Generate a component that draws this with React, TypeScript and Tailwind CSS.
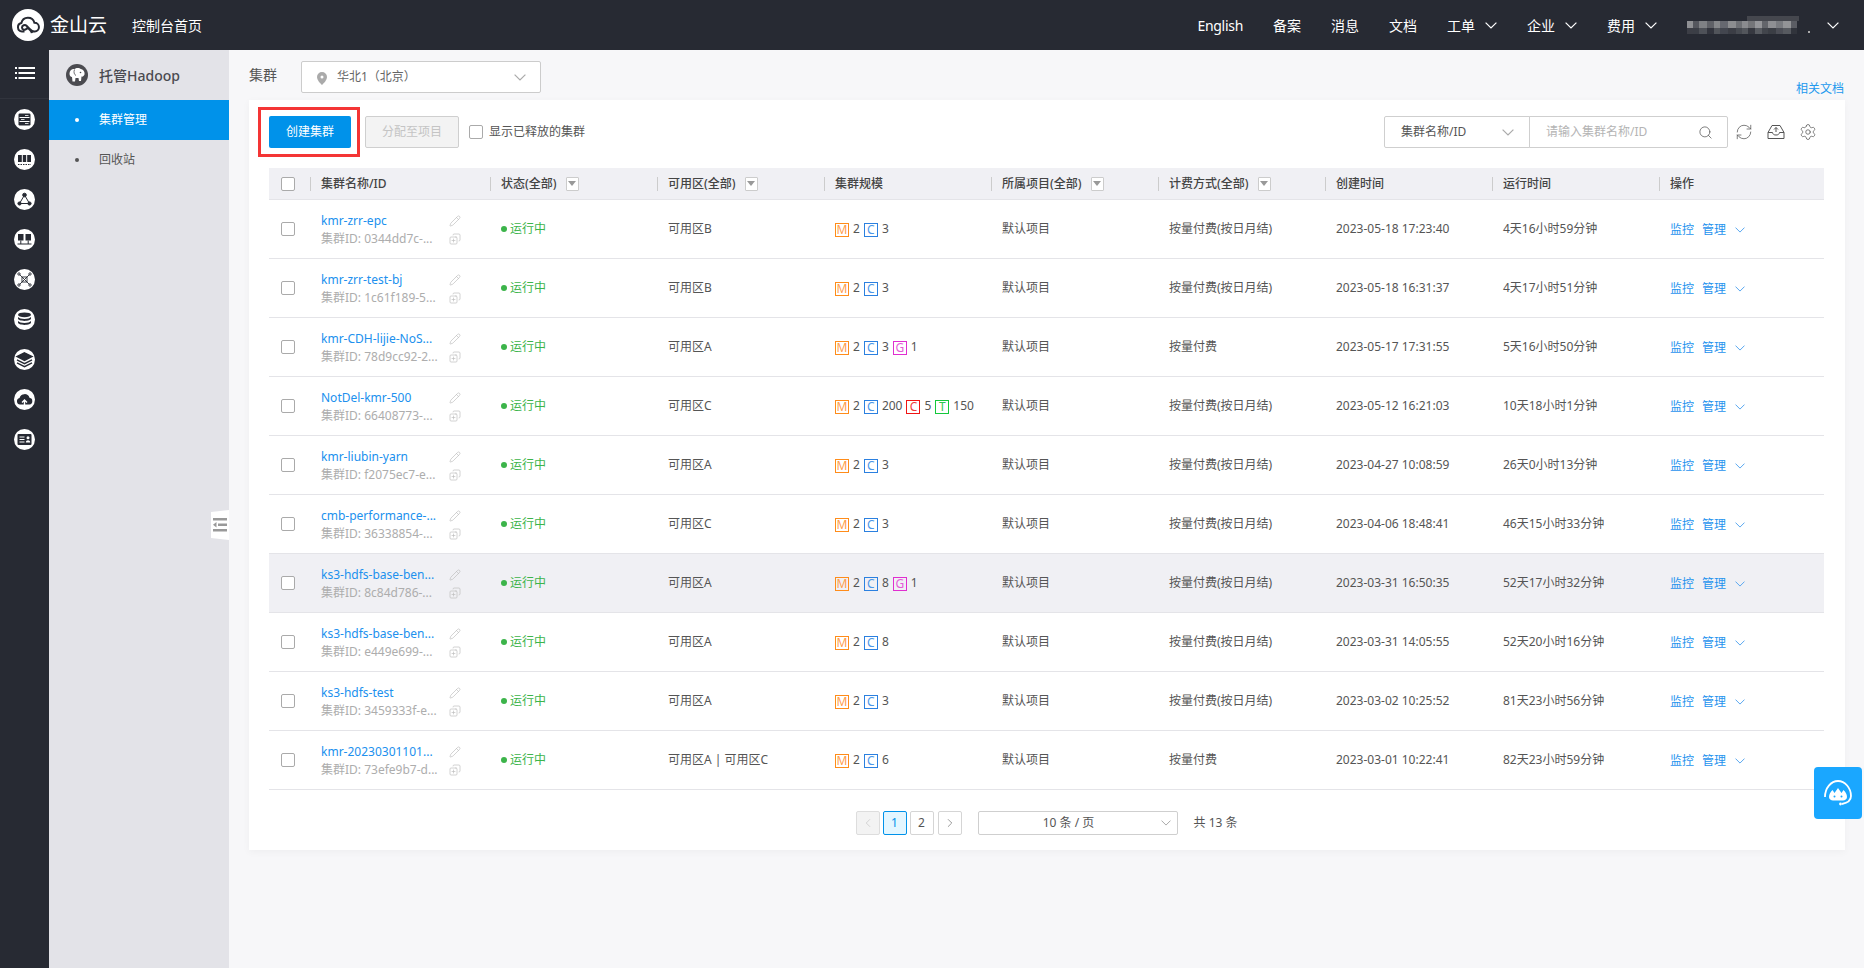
import { ChevronLeft, ChevronRight, CopyPlus, Pencil, RefreshCw, Search, Settings } from 'lucide-react';

type Part = { l: string; c: string; n: number };

const M: Part = { l: 'M', c: 'orange', n: 2 };
const C = (n: number): Part => ({ l: 'C', c: 'blue', n });
const G: Part = { l: 'G', c: 'pink', n: 1 };

const FULL = '按量付费(按日月结)';

const rows = [
  { name: 'kmr-zrr-epc', id: '0344dd7c-...', zone: '可用区B', parts: [M, C(3)], bill: FULL, created: '2023-05-18 17:23:40', run: '4天16小时59分钟' },
  { name: 'kmr-zrr-test-bj', id: '1c61f189-5...', zone: '可用区B', parts: [M, C(3)], bill: FULL, created: '2023-05-18 16:31:37', run: '4天17小时51分钟' },
  { name: 'kmr-CDH-lijie-NoS...', id: '78d9cc92-2...', zone: '可用区A', parts: [M, C(3), G], bill: '按量付费', created: '2023-05-17 17:31:55', run: '5天16小时50分钟' },
  { name: 'NotDel-kmr-500', id: '66408773-...', zone: '可用区C', parts: [M, C(200), { l: 'C', c: 'red', n: 5 }, { l: 'T', c: 'green', n: 150 }], bill: FULL, created: '2023-05-12 16:21:03', run: '10天18小时1分钟' },
  { name: 'kmr-liubin-yarn', id: 'f2075ec7-e...', zone: '可用区A', parts: [M, C(3)], bill: FULL, created: '2023-04-27 10:08:59', run: '26天0小时13分钟' },
  { name: 'cmb-performance-...', id: '36338854-...', zone: '可用区C', parts: [M, C(3)], bill: FULL, created: '2023-04-06 18:48:41', run: '46天15小时33分钟' },
  { name: 'ks3-hdfs-base-ben...', id: '8c84d786-...', zone: '可用区A', parts: [M, C(8), G], bill: FULL, created: '2023-03-31 16:50:35', run: '52天17小时32分钟', hover: true },
  { name: 'ks3-hdfs-base-ben...', id: 'e449e699-...', zone: '可用区A', parts: [M, C(8)], bill: FULL, created: '2023-03-31 14:05:55', run: '52天20小时16分钟' },
  { name: 'ks3-hdfs-test', id: '3459333f-e...', zone: '可用区A', parts: [M, C(3)], bill: FULL, created: '2023-03-02 10:25:52', run: '81天23小时56分钟' },
  { name: 'kmr-20230301101...', id: '73efe9b7-d...', zone: '可用区A | 可用区C', parts: [M, C(6)], bill: '按量付费', created: '2023-03-01 10:22:41', run: '82天23小时59分钟' },
];

const badgeColor: Record<string, string> = {
  orange: 'border-[#ff8c1a] text-[#ff9d4d]',
  blue: 'border-[#2b80e0] text-[#4b96e8]',
  pink: 'border-[#e02ed0] text-[#e55ad8]',
  red: 'border-[#f01414] text-[#f03c3c]',
  green: 'border-[#14c83c] text-[#30c850]',
};

const columns = [
  { t: '状态(全部)', f: true },
  { t: '可用区(全部)', f: true },
  { t: '集群规模' },
  { t: '所属项目(全部)', f: true },
  { t: '计费方式(全部)', f: true },
  { t: '创建时间' },
  { t: '运行时间' },
  { t: '操作' },
];

const gridCols = 'grid grid-cols-[41px_180px_repeat(7,167px)_1fr]';

function Chevron({ className }: { className?: string }) {
  return (
    <svg width="12" height="7" viewBox="0 0 12 7" fill="none" stroke="currentColor" strokeWidth="1.2" className={className}>
      <path d="M.6.6 6 6 11.4.6" />
    </svg>
  );
}

function Check() {
  return <span className="block w-[14px] h-[14px] bg-white border border-[#aaaaaa] rounded-[2px]" />;
}

const D = '#272a33';

// glyphs of the dark rail, all on a 21 wide white disc
const railGlyphs = [
  <g key="1">
    <rect x="4.500" y="4.500" width="12" height="12" rx="1.200" fill={D} />
    <path d="M5.500 8.500h10M5.500 12.500h10" stroke="#fff" strokeWidth="1" />
    <path d="M11 6.500h3.500M7 10.500h3.500M11 14.500h3.500" stroke="#fff" strokeWidth=".8" />
  </g>,
  <g key="2">
    <rect x="4" y="6" width="13" height="7" fill={D} />
    <path d="M8.300 6v7M12.700 6v7" stroke="#fff" strokeWidth="1" />
    <path d="M4 15.500h13" stroke={D} strokeWidth="1.200" strokeDasharray="1.500 1" />
  </g>,
  <g key="3" fill={D} stroke={D} strokeWidth="1">
    <path d="M10.500 6 5.500 14.500h10Z" fill="none" />
    <circle cx="10.500" cy="6" r="1.800" />
    <circle cx="5.500" cy="14.500" r="1.600" />
    <circle cx="15.500" cy="14.500" r="1.600" />
  </g>,
  <g key="4" fill={D}>
    <rect x="4" y="5" width="5.500" height="6.500" />
    <rect x="11.500" y="5" width="5.500" height="6.500" />
    <path d="M6.800 11.500v3.500M14.200 11.500v3.500M3.500 15h14" stroke={D} strokeWidth="1" fill="none" />
  </g>,
  <g key="5" stroke={D} strokeWidth=".9" fill="none">
    <rect x="8" y="8" width="5" height="5" />
    <path d="M8 8 5.500 5.500M13 8l2.500-2.500M8 13l-2.500 2.500M13 13l2.500 2.500M8 8l5 5M13 8l-5 5" />
    <circle cx="5" cy="5" r="1.200" />
    <circle cx="16" cy="5" r="1.200" />
    <circle cx="5" cy="16" r="1.200" />
    <circle cx="16" cy="16" r="1.200" />
  </g>,
  <g key="6" fill={D}>
    <ellipse cx="10.500" cy="5.800" rx="6.500" ry="2.400" />
    <path d="M4 8v1.500c0 1.300 2.900 2.400 6.500 2.400S17 10.800 17 9.500V8c-1 1.300-3.500 2-6.500 2S5 9.300 4 8Z" />
    <path d="M4 12v1.500c0 1.300 2.900 2.400 6.500 2.400S17 14.800 17 13.500V12c-1 1.300-3.500 2-6.500 2S5 13.300 4 12Z" />
  </g>,
  <g key="7" stroke={D} fill="none" strokeWidth="1.400">
    <path d="M10.500 3.800 18 7.600l-7.500 3.800L3 7.600Z" fill={D} />
    <path d="m3 10.800 7.500 3.800 7.500-3.800M3 13.800l7.500 3.800 7.500-3.800" />
  </g>,
  <g key="8">
    <path d="M6 15.500a3.300 3.300 0 0 1-.5-6.500 5.200 5.200 0 0 1 10-.2 3.400 3.400 0 0 1 0 6.700Z" fill={D} />
    <path d="M10.500 17.500v-6M8 13.500l2.500-2.500 2.500 2.500" stroke="#fff" strokeWidth="1.400" fill="none" />
  </g>,
  <g key="9">
    <rect x="3.500" y="5" width="14" height="11" rx="1" fill={D} />
    <path d="M5.500 8h5M5.500 10.500h5M5.500 13h5" stroke="#fff" strokeWidth="1" />
    <circle cx="14" cy="8.800" r="1.500" fill="#fff" />
    <path d="M11.800 13.500c0-3 4.400-3 4.400 0Z" fill="#fff" />
  </g>,
];

function Sidebar() {
  return (
    <aside className="w-[49px] shrink-0 bg-[#272a33] flex flex-col items-center">
      <div className="w-full h-[49px] flex items-center justify-center border-b border-[#31343d]">
        <svg width="20" height="14" viewBox="0 0 20 14" fill="#fff">
          <rect x="0" y="0" width="2" height="2" />
          <rect x="3.500" y="0" width="16.500" height="2" />
          <rect x="0" y="5" width="2" height="2" />
          <rect x="3.500" y="5" width="16.500" height="2" />
          <rect x="0" y="10" width="2" height="2" />
          <rect x="3.500" y="10" width="16.500" height="2" />
        </svg>
      </div>
      <div className="flex flex-col">
        {railGlyphs.map((g, i) => (
          <div key={i} className="w-[49px] h-[40px] flex items-center justify-center">
            <svg width="21" height="21" viewBox="0 0 21 21">
              <circle cx="10.500" cy="10.500" r="10.500" fill="#fff" />
              {g}
            </svg>
          </div>
        ))}
      </div>
    </aside>
  );
}

function Panel() {
  return (
    <nav className="relative w-[180px] shrink-0 bg-[#e3e3e8]">
      <div className="h-[50px] flex items-center pl-[17px] text-[14px] font-medium text-[#4a4a50]">
        <svg width="22" height="22" viewBox="0 0 22 22" className="mr-[11px]">
          <circle cx="11" cy="11" r="11" fill="#4b4b50" />
          <path d="M3.500 9.500C3.500 6.500 6 4.500 8.500 5c1.500-1.500 5-1.500 6.500 0 2.500.5 4 3 3.500 5.500-.5 1.500-2 2.500-3 2l-.5 4.500h-2l-.5-3h-3l-.5 3.500H6.500L6 13c-1.500 0-2.500-1.500-2.500-3.500Z" fill="#fff" />
          <path d="M8.500 5.500C7.500 8 8 10.500 10 11.500" stroke="#4b4b50" strokeWidth=".8" fill="none" />
          <circle cx="14.500" cy="8.500" r=".8" fill="#4b4b50" />
        </svg>
        托管Hadoop
      </div>
      <div className="h-[40px] flex items-center bg-[#0092ea] text-white text-[12px] pl-[26px]">
        <span className="w-[4px] h-[4px] rounded-full bg-white mr-[20px]" />
        集群管理
      </div>
      <div className="h-[40px] flex items-center text-[#555555] text-[12px] pl-[26px]">
        <span className="w-[4px] h-[4px] rounded-full bg-[#555555] mr-[20px]" />
        回收站
      </div>
      <button className="absolute top-[460px] right-0 w-[18px] h-[30px] bg-white flex items-center justify-center [clip-path:polygon(0_2px,100%_0,100%_100%,0_28px)]">
        <svg width="14" height="14" viewBox="0 0 14 14" fill="#999999">
          <rect x="0" y="0" width="14" height="2.500" />
          <rect x="5" y="5.500" width="9" height="2.500" />
          <rect x="0" y="11" width="14" height="2.500" />
          <path d="M3.500 4v5.500L0 6.700Z" />
        </svg>
      </button>
    </nav>
  );
}

function HeaderBar() {
  const mosaic = [
    [0, 6, '#8f9094'], [6, 6, '#55575e'], [12, 8, '#7f8185'], [20, 7, '#5f6167'], [27, 6, '#85878a'], [33, 8, '#666870'], [41, 8, '#8c8d90'], [49, 6, '#6e7075'],
    [55, 6, '#8a8b8f'], [61, 7, '#747579'], [68, 7, '#95969a'], [75, 6, '#63656b'], [81, 8, '#8e8f93'], [89, 7, '#797b80'], [96, 8, '#939497'], [104, 6, '#5b5d64'],
  ] as const;
  return (
    <header className="h-[50px] shrink-0 bg-[#272a33] flex items-center text-white pr-[25px] pl-[12px] text-[14px]">
      <svg width="32" height="32" viewBox="0 0 32 32" className="shrink-0">
        <circle cx="16" cy="16" r="16" fill="#fff" />
        <path d="M12.500 22.500H10a4.300 4.300 0 0 1-.6-8.500 6.700 6.700 0 0 1 13-.3 4.400 4.400 0 0 1 .3 8.800c-2 .2-3.500-1-5-2.500l-3.200-3.200c-1.500-1.500-4.500-.4-4.500 1.700s2.800 3 4.300 1.600l1.500-1.400 2.500 2.500c1 1 1.300 1.800 1.500 3" fill="none" stroke="#272a33" strokeWidth="2" />
      </svg>
      <span className="ml-[6px] text-[19px] leading-none">金山云</span>
      <span className="ml-[25px]">控制台首页</span>
      <div className="ml-auto flex items-center gap-[30px]">
        <span className="tracking-[-0.3px]">English</span>
        <span>备案</span>
        <span>消息</span>
        <span>文档</span>
        {['工单', '企业', '费用'].map((t) => (
          <span key={t} className="flex items-center gap-[10px]">
            {t}
            <Chevron />
          </span>
        ))}
        <span className="flex items-center gap-[16px]">
          <svg width="124" height="19" viewBox="0 0 124 19">
            {mosaic.map(([x, w, c]) => (
              <rect key={x} x={x} y="5" width={w} height="7" fill={c} />
            ))}
            {mosaic.map(([x, w, c], i) => (
              <rect key={x} x={x} y="12" width={w} height="6" fill={c} opacity={i % 3 === 0 ? 0.2 : 0.45} />
            ))}
            <rect x="60" y="0" width="52" height="5" fill="#8a8b8f" opacity=".3" />
            <rect x="121" y="15" width="2" height="2" fill="#aaaaaa" />
          </svg>
          <Chevron />
        </span>
      </div>
    </header>
  );
}

function Toolbar() {
  return (
    <div className="h-[32px] flex items-center text-[12px]">
      <button className="w-[82px] h-[32px] bg-[#0092ea] text-white rounded-[2px]">创建集群</button>
      <button className="ml-[14px] w-[94px] h-[32px] bg-[#f3f3f3] border border-[#cfcfcf] text-[#c4c4c4] rounded-[2px]">分配至项目</button>
      <span className="ml-[10px]"><Check /></span>
      <span className="ml-[6px] text-[#555555]">显示已释放的集群</span>
      <div className="ml-auto flex items-center">
        <div className="w-[146px] h-[32px] bg-white border border-[#cfcfcf] rounded-l-[2px] flex items-center justify-between pl-[16px] pr-[15px] text-[#555555]">
          集群名称/ID
          <Chevron className="text-[#aaaaaa]" />
        </div>
        <div className="w-[199px] h-[32px] -ml-px bg-white border border-[#cfcfcf] rounded-r-[2px] flex items-center justify-between pl-[16px] pr-[14px] text-[#b4b4b4]">
          请输入集群名称/ID
          <Search size={15} strokeWidth={1.2} className="text-[#555555]" />
        </div>
        <div className="ml-[7px] mr-[7px] flex items-center gap-[14px] text-[#555555]">
          <RefreshCw size={18} strokeWidth={1} />
          <svg width="18" height="18" viewBox="0 0 18 18" fill="none" stroke="currentColor" strokeWidth="1">
            <path d="M1 9.500 5 2.500h8l4 7v6H1Z" />
            <path d="M1 9.500h4.500c.5 2 1.500 2.500 3.500 2.500s3-.5 3.500-2.500H17" />
            <path d="M9 9V4.500M7 6.500l2-2 2 2" />
          </svg>
          <Settings size={18} strokeWidth={1} />
        </div>
      </div>
    </div>
  );
}

function Table() {
  return (
    <div className="mt-[20px] text-[12px]">
      <div className={`${gridCols} h-[32px] bg-[#f0f0f4] border-b border-[#e4e4e8] font-medium text-[#444444]`}>
        <div className="pl-[12px] flex items-center"><Check /></div>
        <div className="flex items-center">
          <span className="w-px h-[14px] bg-[#cccccc] mr-[10px]" />
          集群名称/ID
        </div>
        {columns.map((c) => (
          <div key={c.t} className="flex items-center">
            <span className="w-px h-[14px] bg-[#cccccc] mr-[10px]" />
            {c.t}
            {c.f && (
              <span className="ml-[9px] w-[13px] h-[14px] bg-white border border-[#cccccc] rounded-[1px] flex items-center justify-center">
                <span className="w-0 h-0 border-x-[4px] border-x-transparent border-t-[5px] border-t-[#999999]" />
              </span>
            )}
          </div>
        ))}
      </div>
      {rows.map((r) => (
        <div key={r.id} className={`${gridCols} h-[59px] border-b border-[#e4e4e8] text-[#555555] ${r.hover ? 'bg-[#f0f0f4]' : ''}`}>
          <div className="pl-[12px] pb-[1px] flex items-center"><Check /></div>
          <div className="pl-[11px] pr-[29px] pt-[1px] flex flex-col justify-center leading-[18px]">
            <div className="flex items-center justify-between">
              <a className="text-[#2090ee]">{r.name}</a>
              <Pencil size={12} strokeWidth={1.3} className="text-[#bbbbbb] shrink-0" />
            </div>
            <div className="flex items-center justify-between text-[#adadad]">
              <span>集群ID: {r.id}</span>
              <CopyPlus size={12} strokeWidth={1.3} className="text-[#bbbbbb] shrink-0 -scale-x-100" />
            </div>
          </div>
          <div className="pl-[11px] flex items-center text-[#3cb44a]">
            <span className="w-[6px] h-[6px] rounded-full bg-[#3cb44a] mr-[3px]" />
            运行中
          </div>
          <div className="pl-[11px] flex items-center">{r.zone}</div>
          <div className="pl-[11px] flex items-center">
            {r.parts.map((p, i) => (
              <span key={i} className="flex items-center">
                <span className={`w-[14px] h-[14px] border flex items-center justify-center leading-none mt-[1px] ${badgeColor[p.c]}`}>{p.l}</span>
                <span className="ml-[4px] mr-[4px]">{p.n}</span>
              </span>
            ))}
          </div>
          <div className="pl-[11px] flex items-center">默认项目</div>
          <div className="pl-[11px] flex items-center">{r.bill}</div>
          <div className="pl-[11px] flex items-center">{r.created}</div>
          <div className="pl-[11px] flex items-center">{r.run}</div>
          <div className="pl-[11px] pt-[1px] flex items-center text-[#1f93ee]">
            <a>监控</a>
            <a className="ml-[8px]">管理</a>
            <Chevron className="ml-[9px] w-[10px] h-[6px] text-[#5aa8f0]" />
          </div>
        </div>
      ))}
    </div>
  );
}

function Pager() {
  const cell = 'w-[24px] h-[24px] rounded-[2px] flex items-center justify-center border';
  return (
    <div className="pt-[21px] flex items-center justify-center text-[12px] text-[#555555]">
      <span className={`${cell} bg-[#f3f3f3] border-[#dddddd] text-[#bbbbbb]`}><ChevronLeft size={14} strokeWidth={1} /></span>
      <span className={`${cell} ml-[3px] bg-[#e3f6ff] border-[#0092ea] text-[#0092ea]`}>1</span>
      <span className={`${cell} ml-[3px] border-[#d5d5d5]`}>2</span>
      <span className={`${cell} ml-[4px] border-[#d5d5d5]`}><ChevronRight size={14} strokeWidth={1} /></span>
      <div className="ml-[16px] w-[200px] h-[24px] border border-[#cfcfcf] rounded-[2px] relative flex items-center justify-center pr-[18px]">
        10 条 / 页
        <Chevron className="absolute right-[6px] top-[8px] w-[10px] h-[6px] text-[#aaaaaa]" />
      </div>
      <span className="ml-[16px]">共 13 条</span>
    </div>
  );
}

export default function App() {
  return (
    <div className="relative h-screen flex flex-col overflow-hidden bg-[#f7f7f9] [font-family:'Noto_Sans','Noto_Sans_CJK_SC',sans-serif]">
      <HeaderBar />
      <div className="flex flex-1 min-h-0">
        <Sidebar />
        <Panel />
        <main className="flex-1 pl-[20px] pr-[19px]">
          <div className="pt-[11px] mb-[7px] h-[43px] flex">
            <span className="h-[28px] leading-[28px] text-[14px] text-[#555555]">集群</span>
            <div className="ml-[24px] w-[240px] h-[32px] bg-white border border-[#cccccc] rounded-[2px] flex items-center pl-[15px] pr-[14px] text-[12px] text-[#666666]">
              <svg width="10" height="13" viewBox="0 0 10 13" fill="#aaaaaa" className="mr-[10px] mt-[2px]">
                <path d="M5 0a5 5 0 0 1 5 5c0 3-3 6-5 8-2-2-5-5-5-8a5 5 0 0 1 5-5Zm0 3.500a1.500 1.500 0 1 0 0 3 1.500 1.500 0 0 0 0-3Z" />
              </svg>
              华北1（北京）
              <Chevron className="ml-auto text-[#aaaaaa]" />
            </div>
            <a className="ml-auto self-end -mb-[2px] mr-[1px] leading-[12px] text-[12px] text-[#2299ee]">相关文档</a>
          </div>
          <section className="relative h-[750px] bg-white pt-[16px] pl-[20px] pr-[21px] shadow-[0_2px_8px_rgba(0,0,0,0.04)]">
            <Toolbar />
            <Table />
            <Pager />
            <div className="absolute left-[9px] top-[7px] w-[102px] h-[50px] border-[3px] border-[#f43535]" />
          </section>
        </main>
      </div>
      <button className="absolute left-[1814px] top-[767px] w-[48px] h-[52px] rounded-[4px] bg-[#1aa7ff] flex items-center justify-center">
        <svg width="34" height="34" viewBox="0 0 34 34" fill="none">
          <path d="M4 21C4 12 10 5 17 5s13 7 13 15c0 5-4 7-9 8" stroke="#fff" strokeWidth="1.800" />
          <path d="M8 21c0-3 1.500-5 3.500-7l2 3 3.500-5 3.500 5 2-3c2 2 3.500 4 3.500 7 0 2-2 3.500-4 3.500H12c-2 0-4-1.500-4-3.500Z" fill="#fff" />
          <circle cx="13.500" cy="20.500" r="1" fill="#1aa7ff" />
          <circle cx="20.500" cy="20.500" r="1" fill="#1aa7ff" />
          <circle cx="19.500" cy="28" r="1.400" fill="#fff" />
        </svg>
      </button>
    </div>
  );
}
